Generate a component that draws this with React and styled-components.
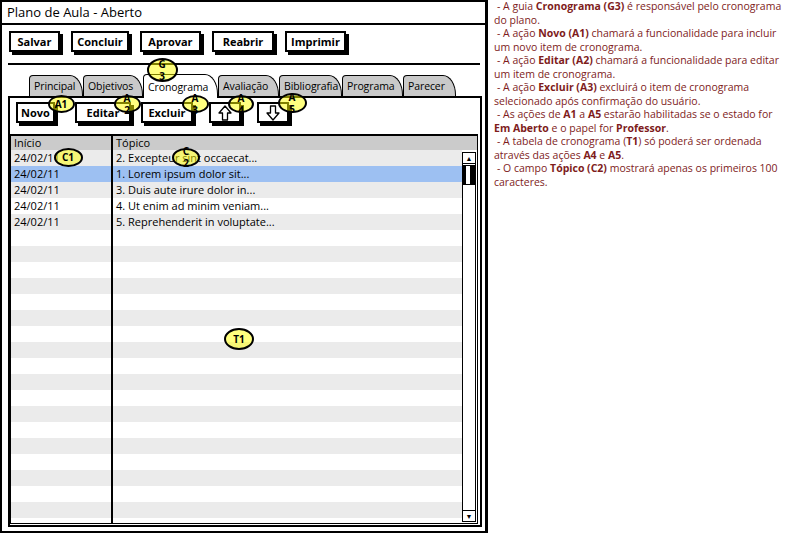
import React from "react";
import styled, { createGlobalStyle } from "styled-components";

const GlobalStyle = createGlobalStyle`
  * { box-sizing: border-box; }
  body {
    margin: 0;
    background: #fff;
    font-family: "Open Sans", "Liberation Sans", sans-serif;
    color: #000;
  }
`;

const Page = styled.div`
  display: flex;
  align-items: flex-start;
  width: 794px;
  height: 535px;
  overflow: hidden;
`;

const Window = styled.div`
  position: relative;
  flex-shrink: 0;
  display: flex;
  flex-direction: column;
  width: 488px;
  height: 533px;
  border: 2px solid #000;
  border-right-width: 3px;
`;

const TitleBar = styled.div`
  height: 23px;
  padding-left: 5px;
  border-bottom: 2px solid #000;
  font-size: 13px;
  line-height: 20px;
`;

const ButtonRow = styled.div`
  display: flex;
  padding: 6px 0 0 7px;
`;

const Button = styled.button`
  display: flex;
  align-items: center;
  justify-content: center;
  width: ${(p) => p.$w}px;
  height: 21px;
  margin-left: ${(p) => p.$ml || 0}px;
  padding: 0;
  border: 2px solid #000;
  background: #fff;
  box-shadow: 3px 3px 0 #000;
  font: bold 11px "Open Sans", "Liberation Sans", sans-serif;
  color: #000;
`;

const Separator = styled.div`
  height: 2px;
  margin: 11px 5px 0 6px;
  background: #000;
`;

const TabsRow = styled.div`
  position: relative;
  z-index: 1;
  display: flex;
  align-items: flex-end;
  margin-top: 9px;
  padding-left: 27px;
`;

const Tab = styled.div`
  width: ${(p) => p.$w}px;
  height: ${(p) => (p.$active ? 24 : 21)}px;
  margin-bottom: ${(p) => (p.$active ? -2 : 0)}px;
  padding-left: 4px;
  border: 1.5px solid #000;
  border-bottom: none;
  border-radius: 4px 13px 0 0 / 4px 20px 0 0;
  background: ${(p) => (p.$active ? "#fff" : "#c9c9c9")};
  font-size: 10.5px;
  letter-spacing: -0.1px;
  line-height: ${(p) => (p.$active ? 24 : 20)}px;
  white-space: nowrap;
`;

const Panel = styled.div`
  position: relative;
  z-index: 0;
  flex: 1;
  display: flex;
  flex-direction: column;
  width: 474px;
  margin: 0 0 4px 6px;
  border: 2px solid #000;
  min-height: 0;
`;

const Toolbar = styled.div`
  display: flex;
  padding: 4px 0 0 6px;
`;

const Table = styled.div`
  flex: 1;
  display: flex;
  flex-direction: column;
  min-height: 0;
  margin: 11px 2px 1px 0;
  border: 1px solid #000;
  border-top-width: 2px;
  overflow: hidden;
`;

const HeaderRow = styled.div`
  display: flex;
  height: 14px;
  background: #cbcbcb;
  font-size: 11px;
  line-height: 14px;
`;

const FirstCell = styled.div`
  flex-shrink: 0;
  width: 102px;
  padding-left: 3px;
  border-right: 2px solid #000;
  white-space: nowrap;
`;

const Cell = styled.div`
  padding-left: 3px;
  white-space: nowrap;
`;

const Body = styled.div`
  flex: 1;
  display: flex;
  min-height: 0;
`;

const Rows = styled.div`
  flex: 1;
  overflow: hidden;
`;

const Row = styled.div`
  display: flex;
  height: 16px;
  background: ${(p) => p.$bg};
  font-size: 11px;
  line-height: 16px;
`;

const Scrollbar = styled.div`
  flex-shrink: 0;
  display: flex;
  flex-direction: column;
  width: 14px;
  margin: 2px 1px 1px 0;
  border: 1px solid #000;
  background: #fff;
`;

const ScrollBtn = styled.div`
  display: flex;
  align-items: center;
  justify-content: center;
  height: 11px;
  border-${(p) => (p.$down ? "top" : "bottom")}: 1px solid #000;
  font-size: 7px;
  line-height: 1;
`;

const Thumb = styled.div`
  height: 20px;
  margin-top: 1px;
  border: 1px solid #000;
  border-left-width: 3px;
  border-right-width: 5px;
  background: #fff;
`;

const Spacer = styled.div`
  flex: 1;
`;

const Marker = styled.div`
  position: absolute;
  left: ${(p) => p.$x - p.$w / 2 - 2}px;
  top: ${(p) => p.$y - p.$h / 2 - 2}px;
  z-index: 5;
  display: flex;
  flex-direction: column;
  align-items: center;
  justify-content: center;
  width: ${(p) => p.$w}px;
  height: ${(p) => p.$h}px;
  border: 2px solid #000;
  border-radius: 50%;
  background: rgba(255, 255, 0, 0.5);
  font: bold 10px "Open Sans", "Liberation Sans", sans-serif;
  line-height: ${(p) => (p.$split ? 12 : 10)}px;
`;

const Notes = styled.div`
  margin-left: 6px;
  color: #7e1c1c;
  font-size: 10.5px;
  line-height: 13.5px;
`;

const NoteLine = styled.div`
  padding-left: ${(p) => (p.$indent ? 3 : 0)}px;
  white-space: nowrap;
`;

const Arrow = ({ down }) => (
  <svg width="14" height="16" viewBox="0 0 14 16">
    <polygon
      points="7,1 13,8 9.5,8 9.5,15 4.5,15 4.5,8 1,8"
      fill="#fff"
      stroke="#000"
      strokeWidth="1.3"
      strokeLinejoin="round"
      transform={down ? "rotate(180 7 8)" : undefined}
    />
  </svg>
);

const tabs = [
  ["Principal", 54],
  ["Objetivos", 60],
  ["Cronograma", 75, true],
  ["Avaliação", 61],
  ["Bibliografia", 63],
  ["Programa", 61],
  ["Parecer", 53],
];

const data = [
  ["24/02/11", "2. Excepteur sint occaecat..."],
  ["24/02/11", "1. Lorem ipsum dolor sit...", true],
  ["24/02/11", "3. Duis aute irure dolor in..."],
  ["24/02/11", "4. Ut enim ad minim veniam..."],
  ["24/02/11", "5. Reprehenderit in voluptate..."],
];

const markers = [
  { x: 162, y: 70, w: 31, h: 24, t: ["G", "3"] },
  { x: 61, y: 104, w: 27, h: 18, t: ["A1"] },
  { x: 127, y: 104, w: 27, h: 18, t: ["A", "2"] },
  { x: 195, y: 104, w: 27, h: 18, t: ["A", "3"] },
  { x: 241, y: 104, w: 26, h: 18, t: ["A", "4"] },
  { x: 292, y: 103, w: 29, h: 20, t: ["A", "5"] },
  { x: 68, y: 157, w: 29, h: 19, t: ["C1"] },
  { x: 186, y: 157, w: 28, h: 19, t: ["C", "2"] },
  { x: 239, y: 339, w: 30, h: 22, t: ["T1"] },
];

function App() {
  const rows = [];
  for (let i = 0; i < 24; i++) {
    const d = data[i];
    let bg = i % 2 === 0 ? "#ebebeb" : "#fff";
    if (d && d[2]) bg = "#9dc0f2";
    rows.push(
      <Row key={i} $bg={bg}>
        <FirstCell>{d ? d[0] : ""}</FirstCell>
        <Cell>{d ? d[1] : ""}</Cell>
      </Row>
    );
  }

  return (
    <Page>
      <GlobalStyle />
      <Window>
        <TitleBar>Plano de Aula - Aberto</TitleBar>
        <ButtonRow>
          <Button $w={51}>Salvar</Button>
          <Button $w={58} $ml={11}>Concluir</Button>
          <Button $w={61} $ml={11}>Aprovar</Button>
          <Button $w={62} $ml={11}>Reabrir</Button>
          <Button $w={61} $ml={11}>Imprimir</Button>
        </ButtonRow>
        <Separator />
        <TabsRow>
          {tabs.map(([label, w, active]) => (
            <Tab key={label} $w={w} $active={active}>
              {label}
            </Tab>
          ))}
        </TabsRow>
        <Panel>
          <Toolbar>
            <Button $w={39}>Novo</Button>
            <Button $w={56} $ml={20}>Editar</Button>
            <Button $w={52} $ml={10}>Excluir</Button>
            <Button $w={32} $ml={16}><Arrow /></Button>
            <Button $w={32} $ml={16}><Arrow down /></Button>
          </Toolbar>
          <Table>
            <HeaderRow>
              <FirstCell>Início</FirstCell>
              <Cell>Tópico</Cell>
            </HeaderRow>
            <Body>
              <Rows>{rows}</Rows>
              <Scrollbar>
                <ScrollBtn>▲</ScrollBtn>
                <Thumb />
                <Spacer />
                <ScrollBtn $down>▼</ScrollBtn>
              </Scrollbar>
            </Body>
          </Table>
        </Panel>
        {markers.map((m, i) => (
          <Marker key={i} $x={m.x} $y={m.y} $w={m.w} $h={m.h} $split={m.t.length > 1}>
            {m.t.map((s) => (
              <span key={s}>{s}</span>
            ))}
          </Marker>
        ))}
      </Window>
      <Notes>
        <NoteLine $indent>- A guia <b>Cronograma (G3)</b> é responsável pelo cronograma</NoteLine>
        <NoteLine>do plano.</NoteLine>
        <NoteLine $indent>- A ação <b>Novo (A1)</b> chamará a funcionalidade para incluir</NoteLine>
        <NoteLine>um novo item de cronograma.</NoteLine>
        <NoteLine $indent>- A ação <b>Editar (A2)</b> chamará a funcionalidade para editar</NoteLine>
        <NoteLine>um item de cronograma.</NoteLine>
        <NoteLine $indent>- A ação <b>Excluir (A3)</b> excluirá o item de cronograma</NoteLine>
        <NoteLine>selecionado após confirmação do usuário.</NoteLine>
        <NoteLine $indent>- As ações de <b>A1</b> a <b>A5</b> estarão habilitadas se o estado for</NoteLine>
        <NoteLine><b>Em Aberto</b> e o papel for <b>Professor</b>.</NoteLine>
        <NoteLine $indent>- A tabela de cronograma (<b>T1</b>) só poderá ser ordenada</NoteLine>
        <NoteLine>através das ações <b>A4</b> e <b>A5</b>.</NoteLine>
        <NoteLine $indent>- O campo <b>Tópico (C2)</b> mostrará apenas os primeiros 100</NoteLine>
        <NoteLine>caracteres.</NoteLine>
      </Notes>
    </Page>
  );
}

export default App;
